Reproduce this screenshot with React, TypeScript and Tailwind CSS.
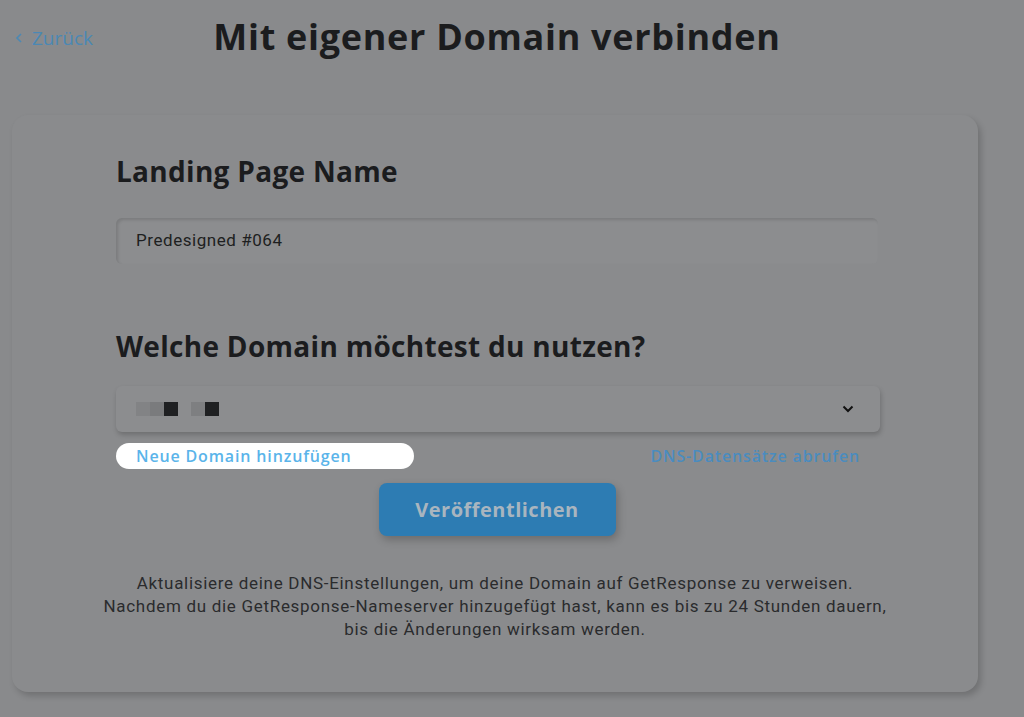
import React from "react";

const heading = { fontFamily: '"Open Sans", "Noto Sans", sans-serif' };
const body = { fontFamily: 'Roboto, "Liberation Sans", sans-serif' };

export default function App() {
  return (
    <div className="w-[1024px] h-[717px] bg-[#898a8c] overflow-hidden relative" style={body}>
      <div className="flex items-start h-[78px]">
        <div className="w-[120px] pl-[15px] pt-[24px] flex items-center gap-[9px] text-[19px] text-[#4b88b4]" style={heading}>
          <svg width="8" height="12" viewBox="0 0 8 12" fill="none" stroke="#4b88b4" strokeWidth="1.6">
            <path d="M6 2 L2 6 L6 10" />
          </svg>
          <span>Zurück</span>
        </div>
        <h1 className="flex-1 pr-[150px] text-center pt-[10px] text-[36px] font-bold text-[#1b1c1e] tracking-[0.7px]" style={heading}>
          Mit eigener Domain verbinden
        </h1>
      </div>

      <div className="ml-[12px] mt-[37px] w-[966px] h-[577px] rounded-[16px] bg-[#8a8b8d] shadow-[3px_4px_6px_rgba(0,0,0,0.18)] px-[104px] pt-[38px]">
        <h2 className="text-[28px] font-bold text-[#1b1c1e] leading-[36px] tracking-[0.3px]" style={heading}>
          Landing Page Name
        </h2>
        <div className="mt-[29px] w-[762px] h-[46px] rounded-[6px] bg-[#8c8d8f] shadow-[inset_2px_2px_3px_rgba(0,0,0,0.12)] flex items-center pl-[20px] text-[17px] tracking-[0.55px] text-[#1e1f21]">
          Predesigned #064
        </div>

        <h2 className="mt-[64px] text-[28px] font-bold text-[#1b1c1e] leading-[36px] tracking-[0.3px]" style={heading}>
          Welche Domain möchtest du nutzen?
        </h2>
        <div className="mt-[22px] w-[764px] h-[46px] rounded-[6px] bg-[#8c8d8f] shadow-[1px_3px_5px_rgba(0,0,0,0.2)] flex items-center justify-between pl-[20px] pr-[26px]">
          <div className="flex items-center">
            <div className="w-[14px] h-[14px] bg-[#828385]" />
            <div className="w-[14px] h-[14px] bg-[#7a7b7d]" />
            <div className="w-[14px] h-[14px] bg-[#1f2022]" />
            <div className="w-[13px]" />
            <div className="w-[14px] h-[14px] bg-[#7e7f81]" />
            <div className="w-[14px] h-[14px] bg-[#1f2022]" />
          </div>
          <svg width="12" height="8" viewBox="0 0 12 8" fill="none" stroke="#111" strokeWidth="2">
            <path d="M1.5 1.5 L6 6 L10.5 1.5" />
          </svg>
        </div>

        <div className="mt-[11px] w-[764px] flex items-center justify-between">
          <div className="w-[298px] h-[26px] rounded-full bg-white flex items-center pl-[20px] text-[16px] font-semibold text-[#5ab4ea] tracking-[0.85px]" style={heading}>
            Neue Domain hinzufügen
          </div>
          <div className="pr-[20px] text-[16px] font-semibold text-[#4a8cbf] tracking-[0.85px]" style={heading}>
            DNS-Datensätze abrufen
          </div>
        </div>

        <div className="flex justify-center mt-[14px] pl-[4px]">
          <div className="w-[237px] h-[53px] rounded-[8px] bg-[#2d7cb3] shadow-[2px_4px_8px_rgba(0,0,0,0.22)] flex items-center justify-center text-[20px] font-bold text-[#a9b5bf] tracking-[0.5px]" style={heading}>
            Veröffentlichen
          </div>
        </div>

        <div className="mt-[36px] text-center text-[17px] leading-[23px] text-[#2a2b2d] tracking-[0.7px] -mx-[40px]">
          <p>Aktualisiere deine DNS-Einstellungen, um deine Domain auf GetResponse zu verweisen.</p>
          <p>Nachdem du die GetResponse-Nameserver hinzugefügt hast, kann es bis zu 24 Stunden dauern,</p>
          <p>bis die Änderungen wirksam werden.</p>
        </div>
      </div>
    </div>
  );
}
